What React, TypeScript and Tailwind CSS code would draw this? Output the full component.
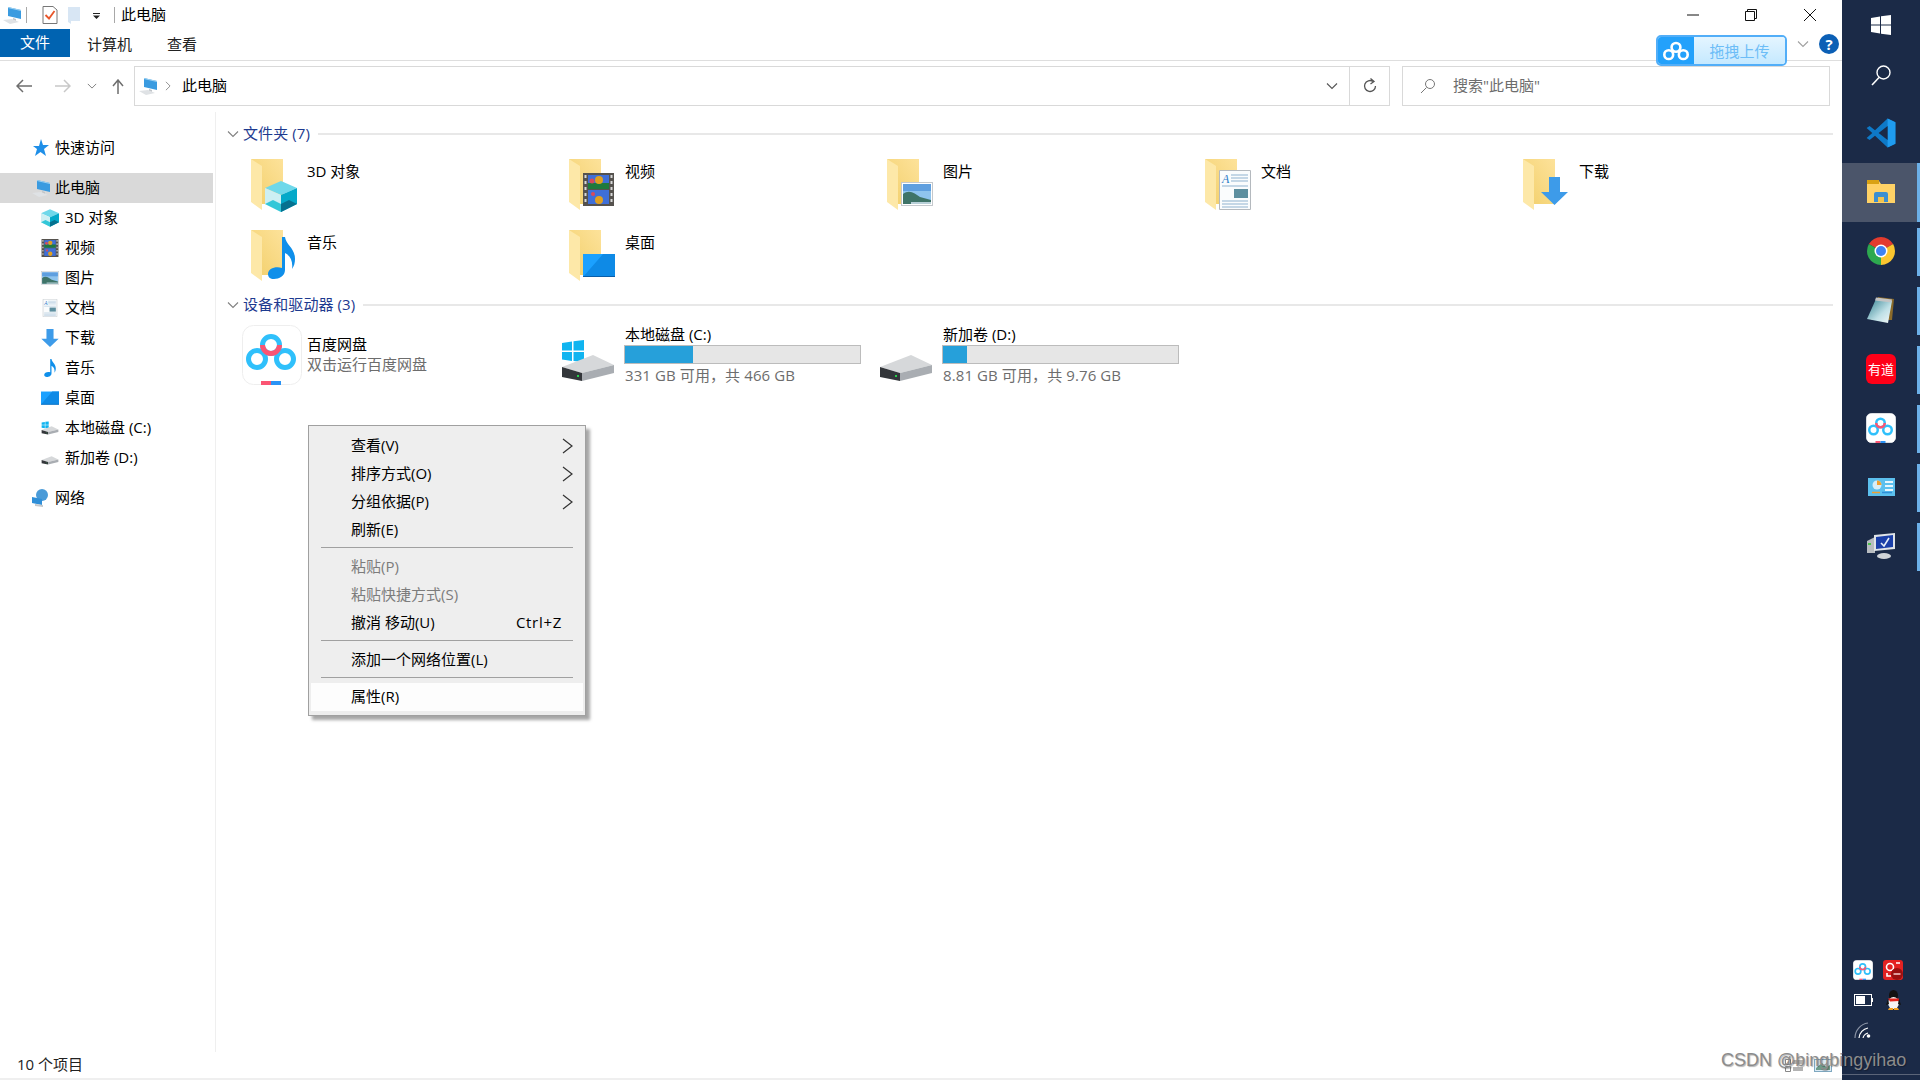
import type { ReactNode } from "react";

const overlays: Record<string, { box: string; art: ReactNode }> = {
  cube: {
    box: "17 24 32 31",
    art: (
      <g>
        <path d="M33 24L49 31L33 38L17 31Z" fill="#6fd8ea" />
        <path d="M17 31L33 38V55L17 47Z" fill="#cdeff3" />
        <path d="M49 31L33 38V55L49 47Z" fill="#04a9c9" />
        <path d="M17 47L25 43L33 47V55Z" fill="#33c7d8" />
        <path d="M49 47L41 43L33 47V55Z" fill="#06718f" />
      </g>
    ),
  },
  film: {
    box: "17 16 31 33",
    art: (
      <g>
        <rect x="17" y="16" width="31" height="33" fill="#55524e" />
        <rect x="22" y="18" width="21" height="14" fill="#3f6fd8" />
        <rect x="22" y="33" width="21" height="14" fill="#3f6fd8" />
        <rect x="22" y="26" width="21" height="6" fill="#1f7a3c" />
        <circle cx="33" cy="23" r="4" fill="#e0a020" />
        <circle cx="26" cy="24" r="2.5" fill="#d84a5a" />
        <circle cx="33" cy="43" r="4" fill="#e0a020" />
        <circle cx="27" cy="37" r="2" fill="#d84a5a" />
        <path d="M18.5 18h2v3h-2zM18.5 24h2v3h-2zM18.5 30h2v3h-2zM18.5 36h2v3h-2zM18.5 42h2v3h-2zM44.5 18h2v3h-2zM44.5 24h2v3h-2zM44.5 30h2v3h-2zM44.5 36h2v3h-2zM44.5 42h2v3h-2z" fill="#d8d8d8" />
      </g>
    ),
  },
  pic: {
    box: "17 25 32 24",
    art: (
      <g>
        <rect x="17.5" y="25.5" width="31" height="23" fill="#fff" stroke="#c4c8cc" />
        <rect x="19" y="27" width="28" height="20" fill="#8fc4ee" />
        <rect x="19" y="27" width="28" height="7" fill="#5f9fdf" />
        <path d="M19 37C25 32 31 36 36 40L47 43V47H19Z" fill="#3f7468" />
        <path d="M27 45H47V47H27Z" fill="#b8d0d8" />
      </g>
    ),
  },
  doc: {
    box: "17 13 32 40",
    art: (
      <g>
        <path d="M17.5 13.5H48.5V52.5H17.5Z" fill="#fafcfd" stroke="#b4b9be" />
        <text x="20" y="26" fontSize="12" fontStyle="italic" fill="#2c7ac8" fontFamily="Liberation Serif, serif">A</text>
        <path d="M29 18H46M29 21H46M29 24H46M20 29H46M20 44H46M20 47H46M20 50H46" stroke="#8fb2cf" />
        <rect x="32" y="32" width="14" height="9" fill="#5d8f9f" />
      </g>
    ),
  },
  arrow: {
    box: "21 20 27 28",
    art: <path d="M29 20H40V35H48L34.5 48L21 35H29Z" fill="#3d9be9" />,
  },
  note: {
    box: "20 9 27 42",
    art: (
      <path
        d="M34 9H37C38 17 47 20 47 31C47 35 46 38 44 41C45 34 43 28 37 25V42C37 48 31 51 26 51C22 51 20 49 20 46C20 41 27 38 34 40Z"
        fill="#0f8fea"
      />
    ),
  },
  desktop: {
    box: "17 26 32 23",
    art: (
      <g>
        <rect x="17" y="26" width="32" height="23" fill="#1ba1ff" />
        <path d="M17 49L37 26H49V49Z" fill="#0e8ae6" />
        <rect x="17" y="48" width="32" height="1" fill="#0a5ea8" />
      </g>
    ),
  },
};

function FolderIcon({ kind }: { kind: string }) {
  return (
    <svg width="56" height="56" viewBox="0 0 56 56" className="shrink-0 ml-[8px] mt-[7px]">
      <defs>
        <linearGradient id="fb" x1="0" y1="1" x2="1" y2="0">
          <stop offset="0" stopColor="#f2cf6a" />
          <stop offset="1" stopColor="#fde29a" />
        </linearGradient>
      </defs>
      <path d="M3 2H35V47H14Z" fill="url(#fb)" />
      <path d="M3 2L14 9V53L3 45Z" fill="#fde8a8" />
      {overlays[kind].art}
    </svg>
  );
}

function SmallIcon({ kind, w = 18, h = 18 }: { kind: string; w?: number; h?: number }) {
  return (
    <svg width={w} height={h} viewBox={overlays[kind].box} preserveAspectRatio="xMidYMid meet">
      {overlays[kind].art}
    </svg>
  );
}

function PcIcon({ size = 20 }: { size?: number }) {
  return (
    <svg width={size} height={size} viewBox="0 0 20 20">
      <path d="M6 2L19 5V14L6 11Z" fill="#3a9be0" />
      <path d="M6 2L19 5V6L6 3Z" fill="#9fd2f2" />
      <path d="M11 13L14 14V16L11 15Z" fill="#c0c4c8" />
      <path d="M1 15L10 14L17 17L8 19Z" fill="#dfe2e5" />
    </svg>
  );
}

function BaiduRings({ pink = true, color = "#2fc0fb" }: { pink?: boolean; color?: string }) {
  return (
    <g fill="none" strokeWidth="5">
      <circle cx="29" cy="20" r="8.500" stroke={color} />
      <circle cx="15" cy="34" r="8.500" stroke={color} />
      <circle cx="43" cy="34" r="8.500" stroke={color} />
      {pink && <path d="M20.500 20A8.500 8.500 0 0 0 37.500 20" stroke="#fb5573" />}
    </g>
  );
}

function BaiduIcon({ size = 60, border = true }: { size?: number; border?: boolean }) {
  return (
    <svg width={size} height={size} viewBox="0 0 60 60" className="shrink-0">
      <rect x="0.5" y="0.5" width="59" height="59" rx="11" fill="#fff" stroke={border ? "#eeeeee" : "#fff"} />
      <BaiduRings />
      <rect x="19" y="56" width="10" height="4" fill="#fb5573" />
      <rect x="29" y="56" width="10" height="4" fill="#2a93f5" />
    </svg>
  );
}

function DriveIcon({ win, w = 56, h = 44 }: { win?: boolean; w?: number; h?: number }) {
  return (
    <svg width={w} height={h} viewBox="0 0 56 44" className="shrink-0">
      {win && <path d="M2 3L12 1.500V10.500H2ZM13.500 1.300L24 0V10.500H13.500ZM2 12H12V21L2 19.500ZM13.500 12H24V22L13.500 21Z" fill="#10b4f0" />}
      <path d="M2 27L33 15L54 25L22 33Z" fill="#d6d8da" />
      <path d="M2 27L22 33V41L2 37Z" fill="#33363a" />
      <path d="M22 33L54 25V33L22 41Z" fill="#a9adb2" />
      <rect x="17" y="35" width="2" height="2" fill="#27d04a" />
    </svg>
  );
}

function Chevron({ dir = "down", cls = "" }: { dir?: "down" | "right"; cls?: string }) {
  return (
    <svg width="12" height="12" viewBox="0 0 12 12" className={cls}>
      <path
        d={dir === "down" ? "M1 3.500L6 8.500L11 3.500" : "M3.500 1L8.500 6L3.500 11"}
        fill="none"
        stroke="currentColor"
        strokeWidth="1.100"
      />
    </svg>
  );
}

function NavItem({ icon, label, pad = "pl-[41px]", active }: { icon: ReactNode; label: string; pad?: string; active?: boolean }) {
  return (
    <div className={`h-[30px] flex items-center ${pad} ${active ? "bg-[#d9d9d9]" : ""}`}>
      <span className="w-[24px] h-[20px] flex items-center shrink-0">{icon}</span>
      <span className="-mt-[2px]">{label}</span>
    </div>
  );
}

function GroupHeader({ label }: { label: string }) {
  return (
    <div className="h-[24px] flex items-center pl-[11px] pr-[9px]">
      <Chevron cls="text-[#808080] shrink-0" />
      <span className="ml-[4px] -mt-[2px] text-[#1d3a8f] whitespace-pre tracking-[0.1px]">{label}</span>
      <span className="flex-1 h-[2px] bg-[#e8e8e8] ml-[8px]" />
    </div>
  );
}

function FolderItem({ kind, label }: { kind: string; label: string }) {
  return (
    <div className="flex h-[71px]">
      <FolderIcon kind={kind} />
      <span className="ml-[3px] mt-[11px]">{label}</span>
    </div>
  );
}

function DriveItem({ name, pct, info, win }: { name: string; pct: number; info: string; win?: boolean }) {
  return (
    <div className="flex h-[70px] pl-[2px]">
      <div className="mt-[15px]">
        <DriveIcon win={win} />
      </div>
      <div className="ml-[8px] w-[237px]">
        <div className="h-[20px] flex items-center pl-px">
          <span className="-mt-[2px]">{name}</span>
        </div>
        <div className="h-[19px] bg-[#e6e6e6] border border-[#bcbcbc]">
          <div className="h-full bg-[#26a0da]" style={{ width: `${pct}%` }} />
        </div>
        <div className="h-[20px] mt-[2px] flex items-center pl-px text-[#6d6d6d]">
          <span className="-mt-[2px] tracking-[0.1px]">{info}</span>
        </div>
      </div>
    </div>
  );
}

function MenuRow({ label, arrow, hint, off, hot }: { label: string; arrow?: boolean; hint?: string; off?: boolean; hot?: boolean }) {
  return (
    <div className={`h-[28px] flex items-center pl-[40px] pr-[10px] ${off ? "text-[#7c7c7c]" : "text-black"} ${hot ? "bg-[#fdfdfd]" : ""}`}>
      <span className="flex-1 -mt-[2px]">{label}</span>
      {hint && <span className="mr-[11px] -mt-[2px] tracking-[0.7px]">{hint}</span>}
      {arrow && (
        <svg width="11" height="16" viewBox="0 0 11 16">
          <path d="M1 1L10 8L1 15" fill="none" stroke="#333" strokeWidth="1.200" />
        </svg>
      )}
    </div>
  );
}

function MenuSep() {
  return <div className="h-px bg-[#a0a0a0] mx-[10px] mt-[3px] mb-[5px]" />;
}

function DockSlot({ children, active }: { children: ReactNode; active?: boolean }) {
  return (
    <div className={`h-[59px] flex items-center ${active ? "bg-[#4b556a]" : ""}`}>
      <div className="flex-1 flex justify-center pl-[3px] pb-[2px]">{children}</div>
      <div className={`w-[3px] bg-[#6cb0e8] ${active ? "h-full" : "h-[48px]"}`} />
    </div>
  );
}

export default function App() {
  return (
    <div className="relative w-[1920px] h-[1080px] flex overflow-hidden bg-white text-black text-[15px] leading-[20px] font-['Open_Sans','Noto_Sans_CJK_SC',sans-serif]">
      <div className="w-[1842px] h-full flex flex-col">
        {/* title bar */}
        <div className="h-[29px] flex items-center pl-[2px] shrink-0">
          <PcIcon size={20} />
          <span className="w-px h-[16px] bg-[#a8a8a8] ml-[4px]" />
          <svg width="16" height="18" viewBox="0 0 16 18" className="ml-[15px]">
            <path d="M1 .500H11L15 4V17.500H1Z" fill="#fff" stroke="#777" />
            <path d="M3.500 9L7 12.500L12.500 5" fill="none" stroke="#e8562a" strokeWidth="1.800" />
          </svg>
          <svg width="14" height="18" viewBox="0 0 14 18" className="ml-[10px]">
            <path d="M0 1H12V15H3V18L0 16Z" fill="#d8e6f4" />
          </svg>
          <svg width="8" height="6" viewBox="0 0 8 6" className="ml-[11px] mt-[3px]">
            <path d="M0 0H7V1H0ZM0 2.500H7L3.500 6Z" fill="#222" />
          </svg>
          <span className="w-px h-[16px] bg-[#a8a8a8] ml-[13px]" />
          <span className="ml-[6px] -mt-[2px]">此电脑</span>
          <div className="ml-auto flex items-center pr-[26px] text-black">
            <svg width="12" height="12" viewBox="0 0 12 12">
              <path d="M0 6H12" stroke="#111" />
            </svg>
            <svg width="12" height="12" viewBox="0 0 12 12" className="ml-[46px]">
              <path d="M.500 2.500H9.500V11.500H.500ZM2.500 2.500V.500H11.500V9.500H9.500" fill="none" stroke="#111" />
            </svg>
            <svg width="12" height="12" viewBox="0 0 12 12" className="ml-[47px]">
              <path d="M0 0L12 12M12 0L0 12" stroke="#111" />
            </svg>
          </div>
        </div>

        {/* ribbon tabs */}
        <div className="h-[32px] flex items-start border-b border-[#dedede] shrink-0">
          <div className="w-[70px] h-[28px] bg-[#0063b1] text-white flex items-center justify-center">
            <span className="-mt-[2px]">文件</span>
          </div>
          <div className="ml-[17px] h-[29px] flex items-center text-[#222]">计算机</div>
          <div className="ml-[35px] h-[29px] flex items-center text-[#222]">查看</div>
        </div>

        {/* address row */}
        <div className="h-[50px] pt-[5px] flex items-start shrink-0">
          <div className="w-[134px] h-[40px] flex items-center text-[#777] shrink-0">
            <svg width="16" height="14" viewBox="0 0 16 14" className="ml-[16px]">
              <path d="M7 1L1 7L7 13M1 7H16" fill="none" stroke="#6e6e6e" strokeWidth="1.500" />
            </svg>
            <svg width="16" height="14" viewBox="0 0 16 14" className="ml-[23px]">
              <path d="M9 1L15 7L9 13M15 7H0" fill="none" stroke="#c8c8c8" strokeWidth="1.500" />
            </svg>
            <Chevron cls="ml-[16px] w-[10px] text-[#777]" />
            <svg width="12" height="15" viewBox="0 0 12 15" className="ml-[15px]">
              <path d="M1 7L6 1L11 7M6 1V15" fill="none" stroke="#6e6e6e" strokeWidth="1.500" />
            </svg>
          </div>
          <div className="w-[1256px] h-[40px] border border-[#d9d9d9] flex items-center shrink-0">
            <span className="ml-[3px]">
              <PcIcon size={20} />
            </span>
            <Chevron dir="right" cls="ml-[5px] w-[10px] text-[#8a8a8a]" />
            <span className="ml-[9px] -mt-[2px]">此电脑</span>
            <Chevron cls="ml-auto mr-[11px] text-[#555]" />
            <div className="w-[40px] h-full border-l border-[#d9d9d9] flex items-center justify-center">
              <svg width="16" height="16" viewBox="0 0 16 16">
                <path d="M13.500 8A5.500 5.500 0 1 1 11 3.400" fill="none" stroke="#555" strokeWidth="1.300" />
                <path d="M8.500 .500L12 3.500L8.500 6" fill="none" stroke="#555" strokeWidth="1.300" />
              </svg>
            </div>
          </div>
          <div className="ml-[12px] w-[428px] h-[40px] border border-[#d9d9d9] flex items-center shrink-0">
            <svg width="16" height="16" viewBox="0 0 16 16" className="ml-[17px]">
              <circle cx="10" cy="6" r="4.500" fill="none" stroke="#777" />
              <path d="M6.500 9.500L1 15" stroke="#777" />
            </svg>
            <span className="ml-[17px] -mt-[2px] text-[#6d6d6d]">搜索"此电脑"</span>
          </div>
        </div>

        {/* body */}
        <div className="flex-1 flex min-h-0">
          <div className="w-[216px] shrink-0 border-r border-[#efefef] pr-[2px] pt-[21px] mt-px">
            <NavItem
              pad="pl-[31px]"
              icon={
                <svg width="18" height="18" viewBox="0 0 18 18">
                  <path d="M10 0L12 6H18L13 10L15 17L9.500 13L4 17L6 10L2 7H8Z" fill="#1f8fe8" />
                </svg>
              }
              label="快速访问"
            />
            <div className="h-[10px]" />
            <NavItem pad="pl-[31px]" active icon={<PcIcon size={20} />} label="此电脑" />
            <NavItem icon={<SmallIcon kind="cube" />} label="3D 对象" />
            <NavItem icon={<SmallIcon kind="film" />} label="视频" />
            <NavItem icon={<SmallIcon kind="pic" />} label="图片" />
            <NavItem icon={<SmallIcon kind="doc" />} label="文档" />
            <NavItem icon={<SmallIcon kind="arrow" />} label="下载" />
            <NavItem icon={<SmallIcon kind="note" />} label="音乐" />
            <NavItem icon={<SmallIcon kind="desktop" />} label="桌面" />
            <NavItem icon={<DriveIcon win w={18} h={15} />} label="本地磁盘 (C:)" />
            <NavItem icon={<DriveIcon w={18} h={15} />} label="新加卷 (D:)" />
            <div className="h-[10px]" />
            <NavItem
              pad="pl-[31px]"
              icon={
                <svg width="18" height="18" viewBox="0 0 18 18">
                  <circle cx="11" cy="6" r="6" fill="#4a9bd8" />
                  <path d="M1 8L11 10V16L1 14Z" fill="#2f8fd8" />
                  <path d="M4 15L12 16V18L4 17Z" fill="#c4c8cc" />
                </svg>
              }
              label="网络"
            />
          </div>

          <div className="flex-1 pt-[11px] min-w-0">
            <GroupHeader label="文件夹 (7)" />
            <div className="grid grid-cols-[repeat(5,318px)] pl-[24px] pt-[4px]">
              <FolderItem kind="cube" label="3D 对象" />
              <FolderItem kind="film" label="视频" />
              <FolderItem kind="pic" label="图片" />
              <FolderItem kind="doc" label="文档" />
              <FolderItem kind="arrow" label="下载" />
              <FolderItem kind="note" label="音乐" />
              <FolderItem kind="desktop" label="桌面" />
            </div>
            <div className="mt-px">
              <GroupHeader label="设备和驱动器 (3)" />
            </div>
            <div className="grid grid-cols-[repeat(5,318px)] pl-[24px] pt-[8px]">
              <div className="flex h-[70px] pl-[2px]">
                <BaiduIcon />
                <div className="ml-[5px] mt-[9px]">
                  <div>百度网盘</div>
                  <div className="text-[#6d6d6d]">双击运行百度网盘</div>
                </div>
              </div>
              <DriveItem win name="本地磁盘 (C:)" pct={29} info="331 GB 可用，共 466 GB" />
              <DriveItem name="新加卷 (D:)" pct={10} info="8.81 GB 可用，共 9.76 GB" />
            </div>
          </div>
        </div>

        {/* status bar */}
        <div className="h-[26px] flex items-center pl-[17px] pr-[10px] shrink-0">
          <span className="-mt-[2px] text-[#222]">10 个项目</span>
          <div className="ml-auto flex items-center gap-[11px]">
            <svg width="18" height="13" viewBox="0 0 18 13">
              <path d="M.500 .500H5.500V5.500H.500ZM.500 7.500H5.500V12.500H.500Z" fill="#fff" stroke="#888" />
              <path d="M8 2H18M8 4H18M8 9H18M8 11H18" stroke="#666" />
            </svg>
            <svg width="18" height="13" viewBox="0 0 18 13">
              <rect x=".5" y=".5" width="17" height="12" fill="#dbeaf4" stroke="#7fa8c0" />
              <path d="M2 9L8 4L12 8L16 6V11H2Z" fill="#6f9d8a" />
            </svg>
          </div>
        </div>
        <div className="h-[2px] bg-[#efefef] shrink-0" />
      </div>

      {/* right docked taskbar */}
      <div className="w-[78px] h-full bg-[#1b2a47] flex flex-col shrink-0">
        <div className="h-[50px] flex items-center justify-center">
          <svg width="20" height="20" viewBox="0 0 20 20">
            <path d="M0 3L9 1.500V9.500H0ZM10 1.300L20 0V9.500H10ZM0 10.500H9V18.500L0 17ZM10 10.500H20V20L10 18.700Z" fill="#fff" />
          </svg>
        </div>
        <div className="h-[50px] flex items-center justify-center">
          <svg width="20" height="21" viewBox="0 0 20 21">
            <circle cx="12.500" cy="7.500" r="6.500" fill="none" stroke="#fff" strokeWidth="1.400" />
            <path d="M8 12.500L1 20" stroke="#fff" strokeWidth="1.600" />
          </svg>
        </div>
        <div className="h-[63px] pt-[3px] flex items-center justify-center">
          <svg width="30" height="30" viewBox="0 0 100 100">
            <path d="M72 2L30 41L12 27L2 33L21 50L2 67L12 73L30 59L72 98L98 86V14Z" fill="#0e79c8" />
            <path d="M72 2L98 14V86L72 98Z" fill="#1f9cf0" />
            <path d="M72 27L42 50L72 73Z" fill="#1b2a47" />
          </svg>
        </div>
        <DockSlot active>
          <svg width="28" height="24" viewBox="0 0 28 24">
            <path d="M0 1H12L14 4H28V23H0Z" fill="#ffd266" />
            <path d="M0 0H12V4H0Z" fill="#d9a213" />
            <path d="M7 22V14Q7 12 9 12H19Q21 12 21 14V22H17V17H11V22Z" fill="#3b8fd0" />
            <rect x="11" y="17" width="6" height="5" fill="#f2c34e" />
          </svg>
        </DockSlot>
        <DockSlot>
          <svg width="28" height="28" viewBox="0 0 28 28">
            <path d="M14 14L1.880 7A14 14 0 0 1 26.120 7Z" fill="#e33b2e" />
            <path d="M14 14L26.120 7A14 14 0 0 1 14 28Z" fill="#fbc62f" />
            <path d="M14 14L14 28A14 14 0 0 1 1.880 7Z" fill="#2da94f" />
            <circle cx="14" cy="14" r="6.500" fill="#fff" />
            <circle cx="14" cy="14" r="5" fill="#3f83f1" />
          </svg>
        </DockSlot>
        <DockSlot>
          <svg width="28" height="28" viewBox="0 0 28 28">
            <defs>
              <linearGradient id="nb" x1="0" y1="0" x2="1" y2="1">
                <stop offset="0" stopColor="#2f7f8f" />
                <stop offset="0.600" stopColor="#bfe0e6" />
                <stop offset="1" stopColor="#f4f8f8" />
              </linearGradient>
            </defs>
            <path d="M11 1L27 3L25 24L4 24Z" fill="#8a6a2a" />
            <path d="M9 3L25 5L21 27L0 23Z" fill="url(#nb)" />
            <path d="M9 1.500L25 3.500L24.500 6.500L8 4.500Z" fill="#c4c4c4" />
          </svg>
        </DockSlot>
        <DockSlot>
          <div className="w-[30px] h-[30px] rounded-[6px] bg-[#ff0018] flex items-center justify-center text-white text-[13px] leading-none font-['Noto_Sans_CJK_SC',sans-serif]">
            有道
          </div>
        </DockSlot>
        <DockSlot>
          <BaiduIcon size={30} border={false} />
        </DockSlot>
        <DockSlot>
          <svg width="27" height="18" viewBox="0 0 27 18">
            <rect width="27" height="18" fill="#5cc0ee" />
            <circle cx="9" cy="7" r="4.500" fill="#d8eef8" />
            <path d="M9 7V2.500A4.500 4.500 0 0 1 13.500 7Z" fill="#f0a030" />
            <path d="M17 3H25V5H17ZM17 7H25V9H17ZM17 11H25V13H17Z" fill="#e8f6fc" />
            <path d="M4 14.500H12" stroke="#f0a030" strokeWidth="1.500" />
            <path d="M14 14.500H24" stroke="#2f8fd8" strokeWidth="1.500" />
          </svg>
        </DockSlot>
        <DockSlot>
          <svg width="28" height="26" viewBox="0 0 28 26">
            <path d="M0 8L8 4V20L0 20Z" fill="#b8bcc0" />
            <path d="M7 2L28 0V16L7 18Z" fill="#e0e4e8" />
            <path d="M9 4L26 2V14L9 16Z" fill="#1a3fa8" />
            <path d="M14 10L17 13L22 5" fill="none" stroke="#e8f0f8" strokeWidth="1.600" />
            <ellipse cx="17" cy="23" rx="7" ry="3" fill="#d0d4d8" />
            <rect x="1" y="10" width="3" height="2" fill="#4ac04a" />
          </svg>
        </DockSlot>

        <div className="mt-auto grid grid-cols-[30px_30px] auto-rows-[30px] pl-[6px] items-center justify-items-center">
          <BaiduIcon size={20} border={false} />
          <svg width="20" height="20" viewBox="0 0 20 20">
            <rect width="20" height="20" rx="3" fill="#e32222" />
            <circle cx="7" cy="7" r="3.500" fill="none" stroke="#fff" strokeWidth="1.600" />
            <path d="M13 3H17M4 13V16H8" fill="none" stroke="#fff" strokeWidth="1.600" />
            <circle cx="14" cy="14" r="6" fill="#9b1010" />
            <path d="M10.500 14H17.500" stroke="#f0c0c0" strokeWidth="1.600" />
          </svg>
          <svg width="19" height="12" viewBox="0 0 19 12">
            <rect x=".5" y=".5" width="17" height="11" fill="none" stroke="#fff" />
            <rect x="2" y="2" width="9" height="8" fill="#fff" />
            <rect x="18" y="4" width="1" height="4" fill="#fff" />
          </svg>
          <svg width="15" height="20" viewBox="0 0 15 20">
            <ellipse cx="7.500" cy="5.500" rx="4.500" ry="5.500" fill="#111" />
            <ellipse cx="7.500" cy="13" rx="5.500" ry="6" fill="#f5f5f5" />
            <path d="M2 8.500H13V11L4 11.500Z" fill="#e2231a" />
            <path d="M2 9L0 15L3 14ZM13 9L15 15L12 14Z" fill="#111" />
            <path d="M3 18H7V20H2ZM8 18H12L13 20H8Z" fill="#f0a020" />
          </svg>
          <svg width="18" height="16" viewBox="0 0 18 16">
            <path d="M1 16A15 15 0 0 1 14 1" fill="none" stroke="#8a93a5" strokeWidth="1.200" />
            <path d="M5 16A11 11 0 0 1 14 6" fill="none" stroke="#fff" strokeWidth="1.200" />
            <path d="M9 16A7 7 0 0 1 14 11" fill="none" stroke="#fff" strokeWidth="1.200" />
            <circle cx="14.500" cy="14" r="1.800" fill="#fff" />
          </svg>
        </div>
        <div className="h-[29px] mt-0" />
        <div className="h-px bg-[#5b6478]" />
        <div className="h-[5px]" />
      </div>

      {/* context menu */}
      <div className="absolute left-[308px] top-[425px] w-[278px] h-[291px] bg-[#eeeeee] border border-[#a0a0a0] shadow-[4px_4px_3px_rgba(0,0,0,0.35)] pt-[6px] px-[2px] text-black">
        <MenuRow label="查看(V)" arrow />
        <MenuRow label="排序方式(O)" arrow />
        <MenuRow label="分组依据(P)" arrow />
        <MenuRow label="刷新(E)" />
        <MenuSep />
        <MenuRow label="粘贴(P)" off />
        <MenuRow label="粘贴快捷方式(S)" off />
        <MenuRow label="撤消 移动(U)" hint="Ctrl+Z" />
        <MenuSep />
        <MenuRow label="添加一个网络位置(L)" />
        <MenuSep />
        <MenuRow label="属性(R)" hot />
      </div>

      {/* baidu upload button */}
      <div className="absolute left-[1656px] top-[35px] w-[131px] h-[31px] rounded-[5px] border-2 border-[#52aef8] flex overflow-hidden">
        <div className="w-[36px] bg-[#23a1fb] flex items-center justify-center shrink-0">
          <svg width="26" height="22" viewBox="4 8 50 38">
            <BaiduRings pink={false} color="#ffffff" />
          </svg>
        </div>
        <div className="flex-1 bg-gradient-to-b from-[#e4f5ff] to-[#c5e9ff] text-[#6cbdf7] flex items-center justify-center text-[15px]">
          拖拽上传
        </div>
      </div>
      <div className="absolute left-[1797px] top-[38px] text-[#a0a0a0]">
        <Chevron />
      </div>
      <div className="absolute left-[1819px] top-[34px] w-[20px] h-[20px] rounded-full bg-[#0b5fb5] text-white font-bold text-[15px] leading-[20px] text-center">
        ?
      </div>

      {/* watermark */}
      <div className="absolute left-[1721px] top-[1048px] text-[18px] leading-[24px] text-[#8c8c8c] [text-shadow:1px_1px_1px_rgba(0,0,0,0.3)] font-['Liberation_Sans',sans-serif]">
        CSDN @bingbingyihao
      </div>
    </div>
  );
}
